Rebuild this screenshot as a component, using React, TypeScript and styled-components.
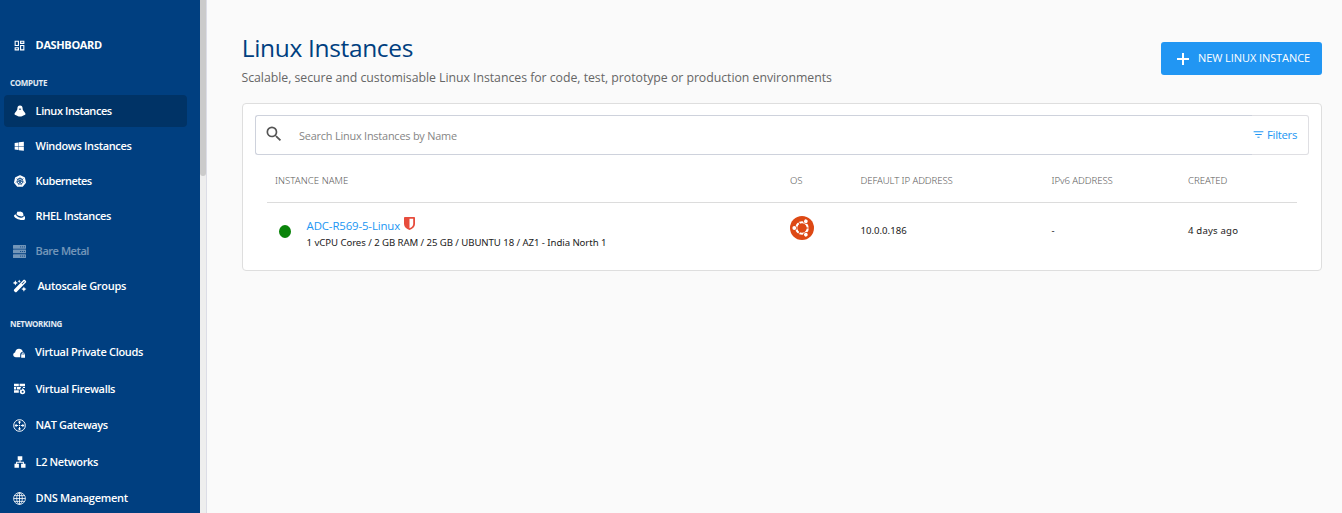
import React from "react";
import styled, { createGlobalStyle } from "styled-components";
import { FaWindows, FaRedhat } from "react-icons/fa";
import { FaWandMagicSparkles } from "react-icons/fa6";
import { SiKubernetes } from "react-icons/si";
import { MdFilterList, MdOutlineDashboard, MdSearch } from "react-icons/md";

const GlobalStyle = createGlobalStyle`
  * { box-sizing: border-box; }
  body {
    margin: 0;
    background: #fafafa;
    font-family: "Open Sans", "Noto Sans", sans-serif;
    overflow: hidden;
  }
`;

const Page = styled.div`
  display: flex;
  height: 100vh;
  overflow: hidden;
`;

const Sidebar = styled.nav`
  flex: 0 0 200px;
  background: #003f80;
  color: #fff;
  overflow: hidden;
  padding-top: 29px;
`;

const ScrollTrack = styled.div`
  flex: 0 0 7px;
  background: #eeeeee;
  border-right: 1px solid #dcdde6;
`;

const ScrollThumb = styled.div`
  height: 176px;
  background: #cbcbcb;
  border-radius: 0 0 3px 3px;
`;

const NavItem = styled.a<{ $active?: boolean; $disabled?: boolean; $pitch?: number; $indent?: number }>`
  display: flex;
  align-items: center;
  width: 183px;
  height: 32px;
  margin: 0 0 ${(p) => (p.$pitch ?? 35) - 32}px 4px;
  padding-left: 8px;
  border-radius: 4px;
  background: ${(p) => (p.$active ? "#003366" : "transparent")};
  opacity: ${(p) => (p.$disabled ? 0.45 : 1)};
  gap: ${(p) => 8.6 + (p.$indent ?? 0)}px;
`;

const NavIcon = styled.span<{ $size?: number }>`
  display: flex;
  align-items: center;
  justify-content: center;
  flex: 0 0 15px;
  height: 15px;
  svg {
    width: ${(p) => p.$size ?? 12}px;
    height: ${(p) => p.$size ?? 12}px;
    flex-shrink: 0;
  }
`;

const NavLabel = styled.span<{ $spacing: number; $bold?: boolean }>`
  font-size: 11px;
  line-height: 16px;
  font-weight: ${(p) => (p.$bold ? 700 : 540)};
  letter-spacing: ${(p) => p.$spacing}px;
  white-space: nowrap;
`;

const SectionTitle = styled.div<{ $top: number; $bottom: number; $spacing: number }>`
  margin: ${(p) => p.$top}px 0 ${(p) => p.$bottom}px 10px;
  height: 12px;
  font-size: 8px;
  line-height: 12px;
  font-weight: 700;
  letter-spacing: ${(p) => p.$spacing}px;
  color: #e3ebf3;
`;

const Main = styled.main`
  flex: 1;
  padding: 30px 20px 0 35px;
`;

const Header = styled.header`
  display: flex;
  justify-content: space-between;
  height: 73px;
`;

const Title = styled.h1`
  margin: 0 0 0 -0.3px;
  font-size: 24.5px;
  line-height: 36px;
  font-weight: 400;
  letter-spacing: -0.33px;
  color: #003f80;
`;

const Subtitle = styled.p`
  margin: 3px 0 0 -0.5px;
  font-size: 12.3px;
  line-height: 18px;
  letter-spacing: -0.035px;
  color: #666;
`;

const NewButton = styled.button`
  display: flex;
  align-items: center;
  width: 161px;
  height: 33px;
  margin-top: 12px;
  padding: 0 0 0 16px;
  border: 0;
  border-radius: 3px;
  background: #2196f3;
  color: #fff;
  font-family: inherit;
  font-size: 11px;
  font-weight: 500;
  letter-spacing: -0.08px;
  white-space: nowrap;
  svg { margin-right: 9px; }
`;

const ButtonText = styled.span`
  padding-bottom: 2px;
`;

const Card = styled.section`
  height: 168px;
  padding: 11px 12px 0;
  border: 1px solid #dedede;
  border-radius: 4px;
  background: #fff;
`;

const SearchBar = styled.div`
  display: flex;
  height: 40px;
`;

const SearchField = styled.div`
  flex: 1;
  display: flex;
  align-items: center;
  padding-left: 8px;
  border: 1px solid #ced2dc;
  border-right: 0;
  border-radius: 3px 0 0 3px;
  color: #858585;
  font-size: 10.9px;
  letter-spacing: -0.2px;
  svg { width: 20px; height: 20px; margin: -3px 15.4px 0 -0.4px; color: #555; }
`;

const Filters = styled.div`
  display: flex;
  align-items: center;
  width: 57px;
  padding-bottom: 1px;
  border: 1px solid #dfdfe3;
  border-left: 0;
  border-radius: 0 3px 3px 0;
  color: #2196f3;
  font-size: 11.4px;
  font-weight: 450;
  letter-spacing: -0.3px;
  svg { width: 13px; height: 13px; margin-right: 2px; }
`;

const Columns = styled.div`
  display: grid;
  grid-template-columns: 515px 70.5px 191px 136.5px auto;
  margin: 0 12px 0 12px;
  padding-left: 8px;
`;

const HeadRow = styled(Columns)`
  height: 48px;
  padding-top: 3px;
  align-items: center;
  border-bottom: 1px solid #dcdcdc;
`;

const HeadCell = styled.span<{ $spacing?: number }>`
  font-family: "Noto Sans", sans-serif;
  font-size: 9.6px;
  font-weight: 350;
  letter-spacing: ${(p) => p.$spacing ?? 0}px;
  color: #5c5c5c;
`;

const BodyRow = styled(Columns)`
  height: 56px;
  align-items: center;
`;

const Cell = styled.span<{ $spacing?: number }>`
  font-family: "Noto Sans", sans-serif;
  font-size: 9.6px;
  line-height: 14px;
  letter-spacing: ${(p) => p.$spacing ?? 0}px;
  color: #222;
`;

const NameCell = styled.div`
  display: flex;
  align-items: center;
  gap: 15.600px;
  padding: 5px 0 0 4px;
`;

const StatusDot = styled.span`
  width: 12px;
  height: 13px;
  margin-top: -4px;
  border-radius: 50%;
  background: #0a840a;
`;

const NameText = styled.div`
  display: flex;
  flex-direction: column;
  gap: 2px;
`;

const NameLine = styled.div`
  display: flex;
  align-items: center;
  height: 17px;
  svg { margin: -5px 0 0 4px; }
`;

const InstanceLink = styled.a`
  font-size: 11.4px;
  line-height: 17px;
  letter-spacing: -0.13px;
  color: #2196f3;
`;

const OsBadge = styled.span`
  display: flex;
  align-items: center;
  justify-content: center;
  width: 24px;
  height: 24px;
  margin-top: -6px;
  border-radius: 50%;
  background: #dd4814;
`;

const Plus = () => (
  <svg width="12" height="12" viewBox="0 0 12 12">
    <path d="M6 0v12M0 6h12" stroke="#fff" strokeWidth="2" />
  </svg>
);

const Penguin = () => (
  <svg viewBox="0 0 12 12" fill="#fff">
    <path d="M6 .4C4.200.4 3.400 1.700 3.400 3.200c0 1.200-.3 1.800-1 2.700C1.600 7 .7 7.800.5 8.800c-.1.800.6 1.200 1.500 1.400.9.2 1.400.7 2 1 .7.3 3.300.3 4 0 .6-.3 1.100-.8 2-1 .9-.2 1.600-.6 1.500-1.400C11.300 7.800 10.400 7 9.600 5.900c-.7-.9-1-1.500-1-2.700C8.600 1.700 7.800.4 6 .4Z" />
    <path d="M4.600 4.100 6 3.400l1.400.7L6 4.900Z" fill="#003366" />
  </svg>
);

const Servers = () => (
  <svg viewBox="0 0 13 13">
    {[0, 4.6, 9.2].map((y) => (
      <g key={y}>
        <rect x="0" y={y} width="13" height="3.700" rx=".5" fill="#fff" />
        <path d={`M7 ${y + 1.9}h1.200M9 ${y + 1.9}h1.200M11 ${y + 1.9}h1`} stroke="#003f80" strokeWidth=".8" />
      </g>
    ))}
  </svg>
);

const CloudLock = () => (
  <svg viewBox="0 0 13 13" fill="#fff">
    <path d="M3 11.200C1.300 11.200.2 10.200.2 8.800c0-1.200.8-2.100 1.900-2.300C2.300 4.300 3.900 2.800 6 2.800c2 0 3.400 1.200 3.900 3-1.600.1-2.700 1.300-2.700 2.800v2.600Z" />
    <path d="M8.200 8.600h.5v-.7a1.400 1.400 0 0 1 2.800 0v.7h.5v3.200H8.200Zm1.200 0h1.400v-.7a.7.7 0 0 0-1.400 0Z" fillRule="evenodd" />
  </svg>
);

const Firewall = () => (
  <svg viewBox="0 0 13 13" fill="#fff">
    <path d="M1 1.800h4.800v2.400H1Zm5.600 0H12v2.400H6.600ZM1 5h2v2.400H1Zm2.800 0h4.400l-1.400 2.400h-3ZM1 8.200h4.800v2.600H1ZM10 5h2v1h-2Z" />
    <path d="M9.300 5.400c.2 1.400 2.900 2.200 2.900 4.200a2.700 2.700 0 0 1-5.400 0c0-1.200.8-1.800 1.200-2.600.4.400.6.900.6 1.300.7-.8.900-1.800.7-2.900Z" />
    <circle cx="9.600" cy="9.800" r="1" fill="#003f80" />
  </svg>
);

const Nat = () => (
  <svg viewBox="0 0 13 13" fill="none" stroke="#fff">
    <circle cx="6.500" cy="6.500" r="5.800" strokeWidth="1" />
    <path d="M6.500 2v3M6.500 8v3M2 6.500h3M8 6.500h3" strokeWidth="1" />
    <path d="M6.500 1.400 8.200 3.600H4.800ZM6.500 11.600 8.200 9.400H4.800ZM1.400 6.500 3.600 4.800v3.400ZM11.600 6.500 9.400 4.800v3.400Z" fill="#fff" stroke="none" />
    <circle cx="6.500" cy="6.500" r=".8" fill="#fff" stroke="none" />
  </svg>
);

const Network = () => (
  <svg viewBox="0 0 12 12" fill="#fff">
    <path d="M3.700.3h4.600v4H6.500v1.500h3.400v2h1.600v4H7.100v-4h1.800V6.800H3.100v1h1.800v4H.5v-4h1.600v-2h3.400V4.300H3.700Z" />
  </svg>
);

const Globe = () => (
  <svg viewBox="0 0 13 13" fill="none" stroke="#fff" strokeWidth=".8">
    <circle cx="6.500" cy="6.500" r="5.900" />
    <ellipse cx="6.500" cy="6.500" rx="2.800" ry="5.900" />
    <path d="M6.500.6v11.800M.6 6.500h11.800M1.400 3.600h10.200M1.400 9.400h10.200" />
  </svg>
);

const Shield = () => (
  <svg width="11" height="13" viewBox="0 0 11 13">
    <path d="M0 .8Q0 0 .8 0h9.400q.8 0 .8.800V7c0 3-2.500 5-5.500 6C2.500 12 0 10 0 7Z" fill="#e74c3c" />
    <path d="M5.500 1.700h3.700V7c0 1.900-1.400 3.200-3.700 4.300Z" fill="#fff" />
  </svg>
);

const Ubuntu = () => (
  <svg width="24" height="24" viewBox="0 0 24 24">
    <circle cx="12" cy="12" r="5.700" fill="none" stroke="#fff" strokeWidth="2.300" />
    {[60, 180, 300].map((angle) => (
      <g key={angle} transform={`rotate(${angle} 12 12)`}>
        <path d="M12 12h9" stroke="#dd4814" strokeWidth=".9" transform="rotate(60 12 12)" />
        <circle cx="19.700" cy="12" r="2.600" fill="#dd4814" />
        <circle cx="19.700" cy="12" r="1.900" fill="#fff" />
      </g>
    ))}
    <circle cx="12" cy="12" r="4.500" fill="#dd4814" />
  </svg>
);

type Item = {
  label: string;
  icon: React.ReactNode;
  spacing: number;
  size?: number;
  active?: boolean;
  disabled?: boolean;
  indent?: number;
};

const compute: Item[] = [
  { label: "Linux Instances", icon: <Penguin />, spacing: -0.42, active: true },
  { label: "Windows Instances", icon: <FaWindows />, spacing: -0.35, size: 10.5 },
  { label: "Kubernetes", icon: <SiKubernetes />, spacing: -0.52 },
  { label: "RHEL Instances", icon: <FaRedhat />, spacing: -0.4, size: 11.5 },
  { label: "Bare Metal", icon: <Servers />, spacing: -0.45, size: 13, disabled: true },
  { label: "Autoscale Groups", icon: <FaWandMagicSparkles />, spacing: -0.3, size: 14, indent: 1.8 },
];

const networking: Item[] = [
  { label: "Virtual Private Clouds", icon: <CloudLock />, spacing: -0.3, size: 13, indent: -0.5 },
  { label: "Virtual Firewalls", icon: <Firewall />, spacing: -0.33, size: 13 },
  { label: "NAT Gateways", icon: <Nat />, spacing: -0.37, size: 13 },
  { label: "L2 Networks", icon: <Network />, spacing: -0.38, size: 12 },
  { label: "DNS Management", icon: <Globe />, spacing: -0.28, size: 13 },
];

const NavList = ({ items, pitch }: { items: Item[]; pitch?: number }) => (
  <>
    {items.map((item) => (
      <NavItem
        key={item.label}
        $active={item.active}
        $disabled={item.disabled}
        $indent={item.indent}
        $pitch={pitch}
      >
        <NavIcon $size={item.size}>{item.icon}</NavIcon>
        <NavLabel $spacing={item.spacing}>{item.label}</NavLabel>
      </NavItem>
    ))}
  </>
);

export default function App() {
  return (
    <>
      <GlobalStyle />
      <Page>
        <Sidebar>
          <NavItem $pitch={32}>
            <NavIcon $size={13}><MdOutlineDashboard /></NavIcon>
            <NavLabel $spacing={-0.36} $bold>DASHBOARD</NavLabel>
          </NavItem>
          <SectionTitle $top={16} $bottom={6} $spacing={-0.3}>COMPUTE</SectionTitle>
          <NavList items={compute} />
          <SectionTitle $top={16} $bottom={6.4} $spacing={-0.32}>NETWORKING</SectionTitle>
          <NavList items={networking} pitch={36.5} />
        </Sidebar>
        <ScrollTrack>
          <ScrollThumb />
        </ScrollTrack>
        <Main>
          <Header>
            <div>
              <Title>Linux Instances</Title>
              <Subtitle>
                Scalable, secure and customisable Linux Instances for code, test, prototype or production environments
              </Subtitle>
            </div>
            <NewButton><Plus /><ButtonText>NEW LINUX INSTANCE</ButtonText></NewButton>
          </Header>
          <Card>
            <SearchBar>
              <SearchField><MdSearch />Search Linux Instances by Name</SearchField>
              <Filters><MdFilterList />Filters</Filters>
            </SearchBar>
            <HeadRow>
              <HeadCell $spacing={0.05}>INSTANCE NAME</HeadCell>
              <HeadCell>OS</HeadCell>
              <HeadCell $spacing={-0.1}>DEFAULT IP ADDRESS</HeadCell>
              <HeadCell $spacing={-0.07}>IPv6 ADDRESS</HeadCell>
              <HeadCell>CREATED</HeadCell>
            </HeadRow>
            <BodyRow>
              <NameCell>
                <StatusDot />
                <NameText>
                  <NameLine>
                    <InstanceLink>ADC-R569-5-Linux</InstanceLink>
                    <Shield />
                  </NameLine>
                  <Cell $spacing={-0.06}>1 vCPU Cores / 2 GB RAM / 25 GB / UBUNTU 18 / AZ1 - India North 1</Cell>
                </NameText>
              </NameCell>
              <OsBadge><Ubuntu /></OsBadge>
              <Cell>10.0.0.186</Cell>
              <Cell>-</Cell>
              <Cell $spacing={0.18}>4 days ago</Cell>
            </BodyRow>
          </Card>
        </Main>
      </Page>
    </>
  );
}
